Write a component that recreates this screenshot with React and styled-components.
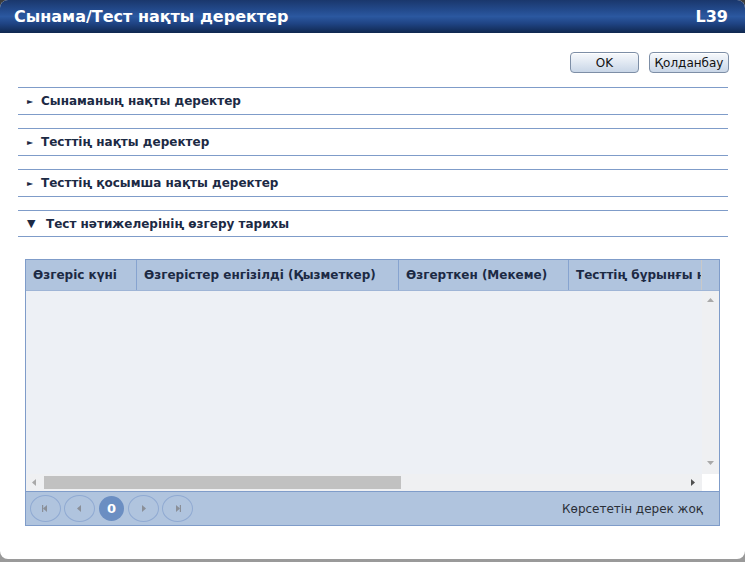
import React from 'react'
import styled, { createGlobalStyle } from 'styled-components'

const GlobalStyle = createGlobalStyle`
  html, body {
    margin: 0;
    padding: 0;
  }
  body {
    width: 745px;
    height: 562px;
    overflow: hidden;
    background: linear-gradient(#3c3c3c 0px, #5a5a5a 60px, #9a9a9a 100%);
    font-family: "DejaVu Sans", Verdana, sans-serif;
    font-size: 12px;
    color: #1c2a44;
  }
`

const Window = styled.div`
  width: 745px;
  height: 559px;
  background: #fff;
  border-radius: 8px;
  overflow: hidden;
  display: flex;
  flex-direction: column;
`
const TitleBar = styled.div`
  height: 33px;
  flex: none;
  display: flex;
  align-items: center;
  justify-content: space-between;
  padding: 0 17px 0 14px;
  background: linear-gradient(#1a376c 0%, #234a8c 30%, #2b58a0 50%, #1f4383 72%, #10284f 100%);
  color: #fff;
  font-weight: bold;
  font-size: 16px;
`
const Body = styled.div`
  flex: 1;
  padding: 19px 17px 0 18px;
  display: flex;
  flex-direction: column;
`
const ButtonRow = styled.div`
  display: flex;
  justify-content: flex-end;
  gap: 10px;
  margin-right: -1px;
  margin-bottom: 14px;
`
const Button = styled.button`
  height: 21px;
  width: ${({ w }) => w}px;
  padding: 0;
  border: 1px solid #7d8ea6;
  border-radius: 4px;
  background: linear-gradient(#f7f9fc 0%, #e3eaf3 45%, #c9d6e7 100%);
  font-family: "DejaVu Sans", Verdana, sans-serif;
  font-size: 12px;
  color: #111;
  box-shadow: inset 0 1px 0 #fff;
`
const Section = styled.div`
  height: ${({ open }) => open ? 25 : 26}px;
  border-top: 1px solid #7f9cc9;
  border-bottom: 1px solid #7f9cc9;
  margin-bottom: 13px;
  display: flex;
  align-items: center;
  padding-left: 9px;
  font-weight: bold;
  font-size: 12px;
  color: #1c2a44;
`
const Caret = styled.span`
  display: inline-block;
  width: ${({ open }) => open ? 19 : 14}px;
  font-size: ${({ open }) => open ? 11 : 8}px;
  color: #1c2a44;
`
const Grid = styled.div`
  margin: 9px 8px 0 7px;
  border: 1px solid #7f9cc9;
  display: flex;
  flex-direction: column;
`
const HeaderRow = styled.div`
  height: 30px;
  display: flex;
  background: #b0c4de;
  border-bottom: 1px solid #9fb5d6;
  overflow: hidden;
`
const HeadCell = styled.div`
  flex: none;
  width: ${({ w }) => w}px;
  padding-left: 7px;
  box-sizing: border-box;
  display: flex;
  align-items: center;
  font-weight: bold;
  white-space: nowrap;
  overflow: hidden;
  border-right: 1px solid ${({ last }) => last ? '#c9c9c9' : '#86a3cf'};
`
const Viewport = styled.div`
  display: grid;
  grid-template-columns: 1fr 17px;
  grid-template-rows: 183px 17px;
`
const Content = styled.div`
  background: #edf0f5;
`
const VScroll = styled.div`
  background: #eff0f2;
  display: flex;
  flex-direction: column;
  justify-content: space-between;
  align-items: center;
  padding: 5px 0 7px;
`
const HScroll = styled.div`
  background: #eff0f2;
  display: flex;
  align-items: center;
  padding: 0 6px 0 5px;
  gap: 6px;
`
const Thumb = styled.div`
  width: 357px;
  height: 13px;
  background: #c1c1c1;
`
const Spacer = styled.div`
  flex: 1;
`
const Corner = styled.div`
  background: #fff;
`
const Pager = styled.div`
  height: 33px;
  background: #b0c4de;
  border-top: 1px solid #7f9cc9;
  display: flex;
  align-items: center;
  padding: 0 16px 0 4px;
`
const PageButtons = styled.div`
  display: flex;
  align-items: center;
  gap: 3px;
  flex: 1;
`
const PageButton = styled.div`
  width: 29px;
  height: 25px;
  border: 1px solid #90aad2;
  border-radius: 50%;
  display: flex;
  align-items: center;
  justify-content: center;
`
const ActivePage = styled.div`
  width: 25px;
  height: 25px;
  margin: 0 1px;
  border-radius: 50%;
  background: #6b8ec2;
  color: #fff;
  font-weight: bold;
  font-size: 13px;
  display: flex;
  align-items: center;
  justify-content: center;
`
const EmptyText = styled.div`
  color: #2a2f38;
  font-size: 12px;
`

const Arrow = ({ dir, color = '#8f8f8f', size = 7, bar }) => {
  const paths = {
    up: 'M0 6 L3.5 2 L7 6 Z',
    down: 'M0 1 L3.5 5 L7 1 Z',
    left: 'M5 0 L1 3.5 L5 7 Z',
    right: 'M2 0 L6 3.5 L2 7 Z',
  }
  return (
    <svg width={size} height={size} viewBox="0 0 7 7">
      <path d={paths[dir]} fill={color} />
      {bar === 'left' && <rect x="0" y="0" width="1.2" height="7" fill={color} />}
      {bar === 'right' && <rect x="5.8" y="0" width="1.2" height="7" fill={color} />}
    </svg>
  )
}

const sections = [
  'Сынаманың нақты деректер',
  'Тесттің нақты деректер',
  'Тесттің қосымша нақты деректер',
]

const columns = [
  { title: 'Өзгеріс күні', w: 111 },
  { title: 'Өзгерістер енгізілді (Қызметкер)', w: 262 },
  { title: 'Өзгерткен (Мекеме)', w: 170 },
  { title: 'Тесттің бұрынғы нәтижесі', w: 133, last: true },
]

const App = () => (
  <>
    <GlobalStyle />
    <Window>
      <TitleBar>
        <span>Сынама/Тест нақты деректер</span>
        <span>L39</span>
      </TitleBar>
      <Body>
        <ButtonRow>
          <Button w={69}>OK</Button>
          <Button w={80}>Қолданбау</Button>
        </ButtonRow>

        {sections.map((title) => (
          <Section key={title}>
            <Caret>►</Caret>
            {title}
          </Section>
        ))}
        <Section open>
          <Caret open>▼</Caret>
          Тест нәтижелерінің өзгеру тарихы
        </Section>

        <Grid>
          <HeaderRow>
            {columns.map((col) => (
              <HeadCell key={col.title} w={col.w} last={col.last}>
                {col.title}
              </HeadCell>
            ))}
          </HeaderRow>
          <Viewport>
            <Content />
            <VScroll>
              <Arrow dir="up" color="#a9a9a9" />
              <Arrow dir="down" color="#a9a9a9" />
            </VScroll>
            <HScroll>
              <Arrow dir="left" color="#a9a9a9" />
              <Thumb />
              <Spacer />
              <Arrow dir="right" color="#505050" />
            </HScroll>
            <Corner />
          </Viewport>
          <Pager>
            <PageButtons>
              <PageButton><Arrow dir="left" bar="left" color="#8a8f98" /></PageButton>
              <PageButton><Arrow dir="left" color="#8a8f98" /></PageButton>
              <ActivePage>0</ActivePage>
              <PageButton><Arrow dir="right" color="#8a8f98" /></PageButton>
              <PageButton><Arrow dir="right" bar="right" color="#8a8f98" /></PageButton>
            </PageButtons>
            <EmptyText>Көрсететін дерек жоқ</EmptyText>
          </Pager>
        </Grid>
      </Body>
    </Window>
  </>
)

export default App
